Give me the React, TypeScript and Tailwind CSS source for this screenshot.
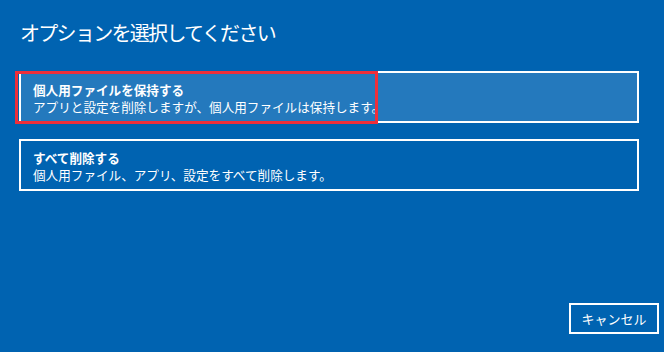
import React from 'react'

const font = { fontFamily: '"Noto Sans CJK JP", "Noto Sans", sans-serif' }

type OptionProps = {
  title: string
  desc: string
  selected?: boolean
}

const OptionCard: React.FC<OptionProps> = ({ title, desc, selected }) => (
  <div className="relative">
    <div
      className={`h-[52px] border-2 border-white flex flex-col justify-center pl-[12px] pt-[1px] text-white text-[12.6px] leading-[17px] ${
        selected ? 'bg-[#2479bd]' : 'bg-[#0063b1]'
      }`}
    >
      <p className="font-bold">{title}</p>
      <p>{desc}</p>
    </div>
    {/* focus highlight */}
    {selected && (
      <div className="absolute left-[-4px] top-0 w-[363px] h-[53px] border-[3px] border-[#ee2f3a] pointer-events-none" />
    )}
  </div>
)

export default function App() {
  return (
    <div className="w-[664px] h-[352px] bg-[#0063b1] flex flex-col text-white" style={font}>
      <h1 className="pl-[20px] pt-[20px] text-[20px] leading-[26px] font-normal tracking-[-1.7px]">
        オプションを選択してください
      </h1>

      <div className="ml-[19px] w-[620px] mt-[25px] flex flex-col gap-[16px]">
        <OptionCard
          selected
          title="個人用ファイルを保持する"
          desc="アプリと設定を削除しますが、個人用ファイルは保持します。"
        />
        <OptionCard title="すべて削除する" desc="個人用ファイル、アプリ、設定をすべて削除します。" />
      </div>

      <div className="flex-1" />

      <div className="flex justify-end pr-[5px] pb-[18px]">
        <button className="w-[90px] h-[31px] border-2 border-white text-[13px] text-white flex items-center justify-center">
          キャンセル
        </button>
      </div>
    </div>
  )
}
